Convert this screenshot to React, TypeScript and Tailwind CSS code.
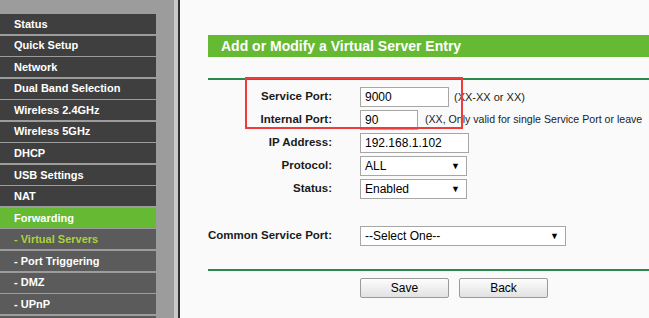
import React from "react";

const menu = [
  { label: "Status" },
  { label: "Quick Setup" },
  { label: "Network" },
  { label: "Dual Band Selection" },
  { label: "Wireless 2.4GHz" },
  { label: "Wireless 5GHz" },
  { label: "DHCP" },
  { label: "USB Settings" },
  { label: "NAT" },
  { label: "Forwarding", active: true },
  { label: "- Virtual Servers", sub: true, current: true },
  { label: "- Port Triggering", sub: true },
  { label: "- DMZ", sub: true },
  { label: "- UPnP", sub: true },
  { label: "", sub: true },
];

function MenuItem({ item }: { item: (typeof menu)[number] }) {
  let cls = "bg-[#3f3f3f] text-white";
  if (item.active) cls = "bg-[#66b933] text-white";
  else if (item.sub && item.current) cls = "bg-[#5b5b5b] text-[#a9d43a]";
  else if (item.sub) cls = "bg-[#5b5b5b] text-white";
  return (
    <div className={`h-[20px] mb-[1.55px] w-[156px] pl-[14px] flex items-center text-[11px] font-bold shrink-0 ${cls}`}>
      {item.label}
    </div>
  );
}

function Select({ value, width }: { value: string; width: string }) {
  return (
    <div className={`h-[20px] ${width} bg-white border border-[#a6a6a6] flex items-center justify-between pl-[4px] pr-[6px] text-[12px] text-black`}>
      <span>{value}</span>
      <span className="text-[9px] leading-none">▼</span>
    </div>
  );
}

function Input({ value, width }: { value: string; width: string }) {
  return (
    <div className={`h-[20px] ${width} bg-white border border-[#a6a6a6] flex items-center pl-[4px] text-[12px] text-black`}>
      {value}
    </div>
  );
}

function Label({ children }: { children: React.ReactNode }) {
  return <div className="text-right text-[11.5px] font-bold text-[#1a1a1a] self-center">{children}</div>;
}

export default function App() {
  return (
    <div className="w-[649px] h-[318px] flex overflow-hidden bg-[#fafafa]" style={{ fontFamily: '"Liberation Sans", Arial, sans-serif' }}>
      <div className="w-[174px] bg-[#9c9c9c] pt-[14px] flex flex-col shrink-0">
        {menu.map((m, i) => (
          <MenuItem key={i} item={m} />
        ))}
      </div>
      <div className="w-[4px] bg-[#c9c9c9] shrink-0" />
      <div className="w-[2px] bg-[#303030] shrink-0" />
      <div className="flex-1 relative pl-[28px] pt-[35px] min-w-0">
        <div className="h-[22px] bg-[#66b933] text-white font-bold text-[14px] pl-[13px] flex items-center">
          Add or Modify a Virtual Server Entry
        </div>
        <div className="mt-[21px] border-t-2 border-[#2a8a4e]" />
        <div className="grid grid-cols-[124px_1fr] gap-x-[28px] gap-y-[3px] mt-[7px]">
          <Label>Service Port:</Label>
          <div className="flex items-center gap-[5px]">
            <Input value="9000" width="w-[89px]" />
            <span className="text-[11px] text-[#222]">(XX-XX or XX)</span>
          </div>
          <Label>Internal Port:</Label>
          <div className="flex items-center gap-[7px] whitespace-nowrap">
            <Input value="90" width="w-[58px] shrink-0" />
            <span className="text-[10.6px] text-[#222]">(XX, Only valid for single Service Port or leave</span>
          </div>
          <Label>IP Address:</Label>
          <Input value="192.168.1.102" width="w-[109px]" />
          <Label>Protocol:</Label>
          <Select value="ALL" width="w-[107px]" />
          <Label>Status:</Label>
          <Select value="Enabled" width="w-[107px]" />
        </div>
        <div className="grid grid-cols-[124px_1fr] gap-x-[28px] mt-[27px]">
          <div className="text-[11.5px] font-bold text-[#1a1a1a] self-center whitespace-nowrap">Common Service Port:</div>
          <Select value="--Select One--" width="w-[206px]" />
        </div>
        <div className="mt-[23px] border-t-2 border-[#2a8a4e]" />
        <div className="flex gap-[10px] pl-[152px] mt-[7px]">
          <button className="w-[89px] h-[20px] border border-[#9a9a9a] rounded-[2px] bg-gradient-to-b from-[#fdfdfd] to-[#e2e2e2] text-[12px] text-black">
            Save
          </button>
          <button className="w-[89px] h-[20px] border border-[#9a9a9a] rounded-[2px] bg-gradient-to-b from-[#fdfdfd] to-[#e2e2e2] text-[12px] text-black">
            Back
          </button>
        </div>
        <div className="absolute left-[65px] top-[77px] w-[218px] h-[52px] border-2 border-[#ee3b3b] pointer-events-none" />
      </div>
    </div>
  );
}
